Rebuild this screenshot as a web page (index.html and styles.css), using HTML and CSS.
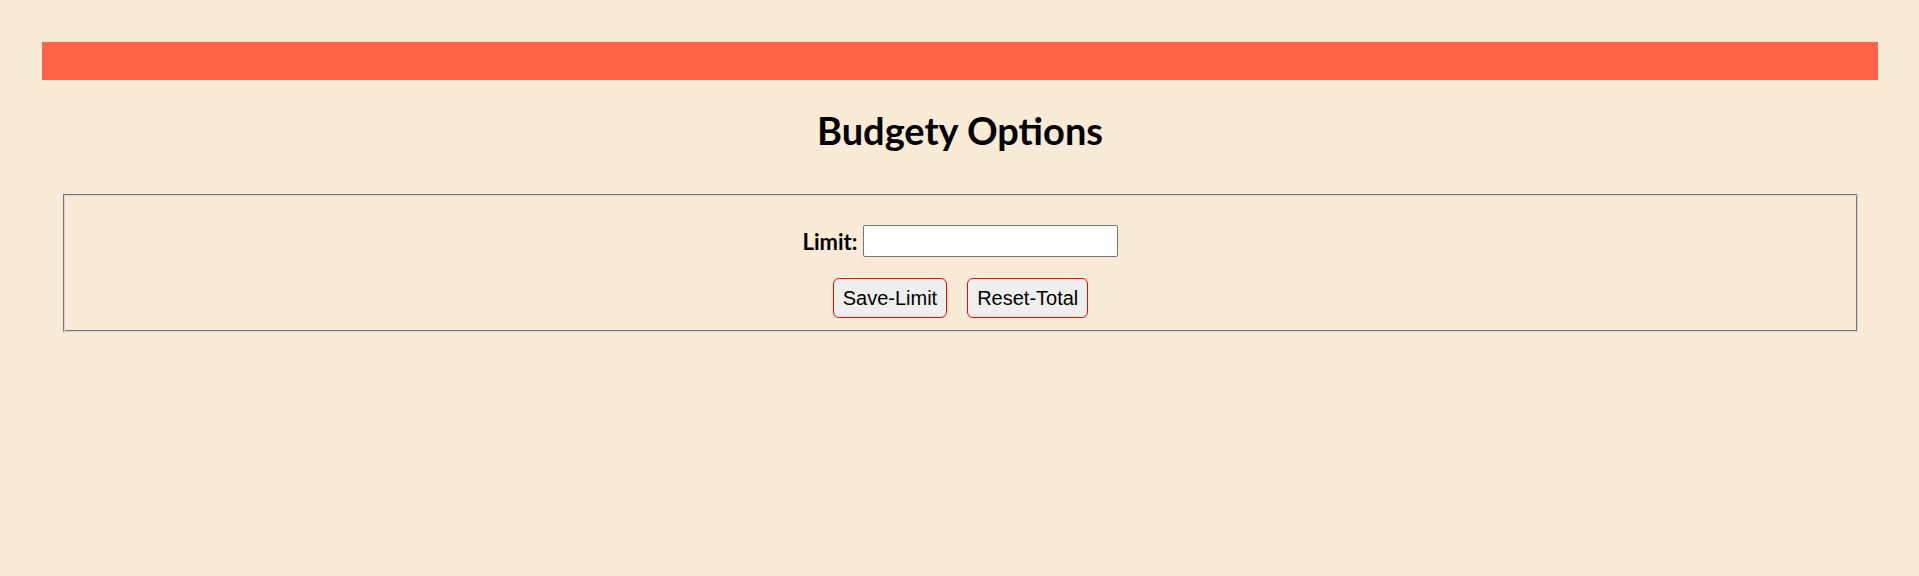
FILE: index.html
```html
<!DOCTYPE html>
<html lang="en">
<head>
<meta charset="utf-8">
<title>Budgety Options</title>
<link rel="stylesheet" href="styles.css">
</head>
<body>
  <div class="page">
    <div class="bar"></div>
    <h1 class="title">Budgety Options</h1>
    <fieldset class="options">
      <div class="limit-row">
        <label class="limit-label" for="limit">Limit:</label>
        <input class="limit-input" id="limit" type="text">
      </div>
      <div class="actions">
        <button class="btn" type="button">Save-Limit</button>
        <button class="btn" type="button">Reset-Total</button>
      </div>
    </fieldset>
  </div>
</body>
</html>
```

FILE: styles.css
```css
html, body {
  margin: 0;
  padding: 0;
}

body {
  background: #faebd7;
  font-family: "Lato", "Open Sans", sans-serif;
  color: #000;
}

.page {
  padding: 42px 41px 0 42px;
}

.bar {
  height: 38px;
  background: #ff6347;
}

.title {
  margin: 28px 0 0 0;
  font-size: 38px;
  line-height: 44px;
  font-weight: 700;
  text-align: center;
}

.options {
  margin: 42px 20px 0 21px;
  padding: 30px 0 13px 0;
  border: 1px solid;
  border-color: #767676 #d4d4d4 #d4d4d4 #767676;
  box-shadow: inset 1px 1px 0 #d4d4d4, inset -1px -1px 0 #767676;
  display: flex;
  flex-direction: column;
  align-items: center;
  gap: 21px;
  min-width: 0;
}

.limit-row {
  display: flex;
  align-items: center;
  gap: 6px;
  height: 32px;
}

.limit-label {
  font-family: "Lato", sans-serif;
  font-weight: 700;
  font-size: 22px;
}

.limit-input {
  box-sizing: border-box;
  width: 255px;
  height: 32px;
  margin: 0;
  border: 1px solid #767676;
  border-radius: 2px;
  background: #fff;
  padding: 1px 2px;
  font-size: 20px;
}

.actions {
  display: flex;
  gap: 20px;
}

.btn {
  box-sizing: border-box;
  height: 40px;
  margin: 0;
  padding: 0 9px;
  font-family: "Liberation Sans", Arial, sans-serif;
  font-size: 20px;
  color: #000;
  background: #efefef;
  border: 1px solid #ff0000;
  border-radius: 6px;
}
```
